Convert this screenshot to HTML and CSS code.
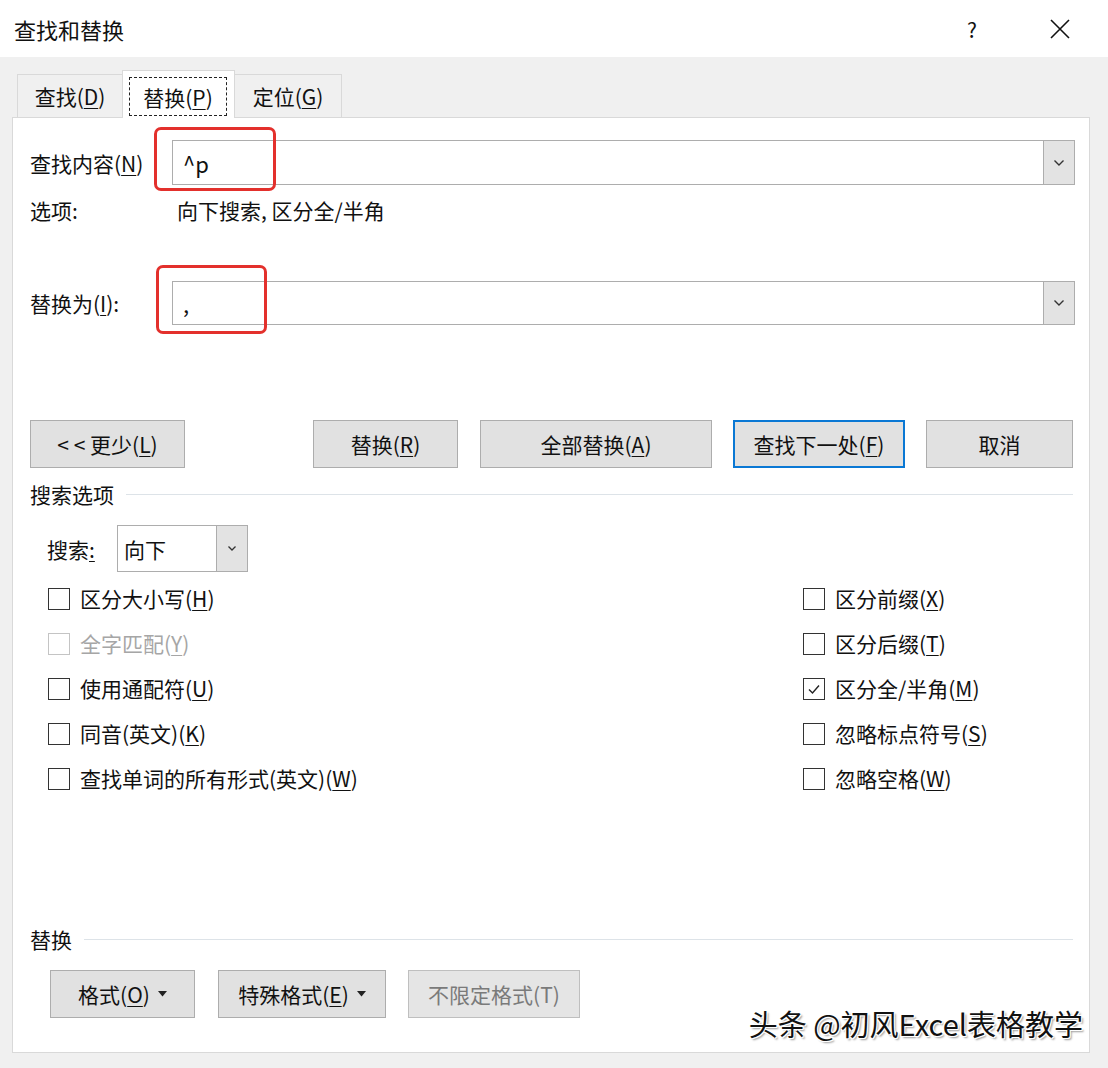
FILE: index.html
```html
<!DOCTYPE html>
<html lang="zh-CN">
<head>
<meta charset="utf-8">
<title>查找和替换</title>
<link rel="stylesheet" href="styles.css">
</head>
<body>
<div class="window">
  <div class="titlebar">
    <div class="title">查找和替换</div>
    <div class="title-actions">
      <span class="help">?</span>
      <svg class="close" width="22" height="22" viewBox="0 0 22 22"><path d="M2 2 L20 20 M20 2 L2 20" stroke="#111" stroke-width="1.6" fill="none"/></svg>
    </div>
  </div>
  <div class="body">
    <div class="tabs">
      <div class="tab">查找(<u>D</u>)</div>
      <div class="tab active"><span class="focus">替换(<u>P</u>)</span></div>
      <div class="tab">定位(<u>G</u>)</div>
    </div>
    <div class="panel">
      <div class="field-row">
        <div class="label">查找内容(<u>N</u>)</div>
        <div class="combo">
          <div class="combo-text">^p</div>
          <div class="combo-btn"><svg width="12" height="8" viewBox="0 0 12 8"><path d="M1.5 1.5 L6 6 L10.5 1.5" stroke="#333" stroke-width="1.4" fill="none"/></svg></div>
        </div>
      </div>
      <div class="options-row">
        <div class="label opt-label">选项:</div>
        <div class="opt-value">向下搜索, 区分全/半角</div>
      </div>
      <div class="field-row replace-row">
        <div class="label">替换为(<u>I</u>):</div>
        <div class="combo">
          <div class="combo-text">,</div>
          <div class="combo-btn"><svg width="12" height="8" viewBox="0 0 12 8"><path d="M1.5 1.5 L6 6 L10.5 1.5" stroke="#333" stroke-width="1.4" fill="none"/></svg></div>
        </div>
      </div>
      <div class="button-row">
        <button class="btn w-less"><span>&lt; &lt; 更少(<u>L</u>)</span></button>
        <button class="btn w-rep"><span>替换(<u>R</u>)</span></button>
        <button class="btn w-all"><span>全部替换(<u>A</u>)</span></button>
        <button class="btn w-next default"><span>查找下一处(<u>F</u>)</span></button>
        <button class="btn w-cancel"><span>取消</span></button>
      </div>
      <div class="section">
        <span class="section-title">搜索选项</span>
        <span class="section-line"></span>
      </div>
      <div class="search-row">
        <span class="search-label">搜索<u>:</u></span>
        <div class="select">
          <div class="select-text">向下</div>
          <div class="select-btn"><svg width="10" height="7" viewBox="0 0 10 7"><path d="M1.5 1.5 L5 5 L8.5 1.5" stroke="#333" stroke-width="1.3" fill="none"/></svg></div>
        </div>
      </div>
      <div class="checks">
        <div class="col">
          <label class="check"><span class="box"></span>区分大小写(<u>H</u>)</label>
          <label class="check disabled"><span class="box"></span>全字匹配(<u>Y</u>)</label>
          <label class="check"><span class="box"></span>使用通配符(<u>U</u>)</label>
          <label class="check"><span class="box"></span>同音(英文)(<u>K</u>)</label>
          <label class="check"><span class="box"></span>查找单词的所有形式(英文)(<u>W</u>)</label>
        </div>
        <div class="col right">
          <label class="check"><span class="box"></span>区分前缀(<u>X</u>)</label>
          <label class="check"><span class="box"></span>区分后缀(<u>T</u>)</label>
          <label class="check"><span class="box"><svg width="16" height="16" viewBox="0 0 16 16"><path d="M3 8.5 L6.5 12 L13 4.5" stroke="#222" stroke-width="1.4" fill="none"/></svg></span>区分全/半角(<u>M</u>)</label>
          <label class="check"><span class="box"></span>忽略标点符号(<u>S</u>)</label>
          <label class="check"><span class="box"></span>忽略空格(<u>W</u>)</label>
        </div>
      </div>
      <div class="section replace-section">
        <span class="section-title">替换</span>
        <span class="section-line"></span>
      </div>
      <div class="bottom-row">
        <button class="btn w-fmt"><span>格式(<u>O</u>)</span><svg class="caret" width="9" height="6" viewBox="0 0 9 6"><path d="M0 0 H9 L4.5 5.5 Z" fill="#222"/></svg></button>
        <button class="btn w-special"><span>特殊格式(<u>E</u>)</span><svg class="caret" width="9" height="6" viewBox="0 0 9 6"><path d="M0 0 H9 L4.5 5.5 Z" fill="#222"/></svg></button>
        <button class="btn w-nofmt disabled"><span>不限定格式(T)</span></button>
      </div>
      <div class="mark mark-find"></div>
      <div class="mark mark-rep"></div>
      <div class="watermark">头条 @初风Excel表格教学</div>
    </div>
  </div>
</div>
</body>
</html>
```
FILE: styles.css
```css
* { box-sizing: border-box; }
html, body { margin: 0; padding: 0; }
body {
  width: 1108px;
  height: 1068px;
  overflow: hidden;
  background: #f0f0f0;
  font-family: "Noto Sans CJK SC", "Noto Sans", sans-serif;
  font-size: 21px;
  color: #111;
}
u { text-decoration: underline; text-underline-offset: 3px; text-decoration-thickness: 1px; }

.titlebar {
  height: 57px;
  background: #fff;
  display: flex;
  align-items: center;
  justify-content: space-between;
  padding: 0 37px 0 14px;
}
.title { font-size: 22px; }
.title-actions { display: flex; align-items: center; gap: 72px; }
.help { font-size: 21px; }
.close { display: block; }

.body { padding: 0 18px 0 12px; }
.tabs {
  display: flex;
  align-items: flex-end;
  padding: 13px 0 0 5px;
  height: 60px;
  position: relative;
  z-index: 2;
}
.tab {
  height: 43px;
  display: flex;
  align-items: center;
  justify-content: center;
  border: 1px solid #d9d9d9;
  border-bottom: none;
  background: #f0f0f0;
}
.tab:nth-child(1) { width: 105px; border-right: none; }
.tab:nth-child(3) { width: 107px; border-left: none; }
.tab.active {
  width: 113px;
  height: 48px;
  background: #fff;
  margin-bottom: -1px;
  padding: 6px 7px 2px 6px;
}
.focus {
  flex: 1;
  align-self: stretch;
  display: flex;
  align-items: center;
  justify-content: center;
  border: 1.5px dashed #222;
}

.panel {
  position: relative;
  background: #fff;
  border: 1px solid #d9d9d9;
  height: 936px;
  padding: 22px 14px 0 17px;
  display: flex;
  flex-direction: column;
}

.field-row { display: flex; align-items: center; height: 45px; }
.label { width: 142px; flex: none; white-space: nowrap; }
.combo {
  flex: 1;
  height: 100%;
  display: flex;
  border: 1px solid #adadad;
  background: #fff;
}
.combo-text { flex: 1; padding-left: 10px; display: flex; align-items: center; font-size: 22px; }
.combo-btn {
  width: 31px;
  background: #e3e3e3;
  border-left: 1px solid #adadad;
  display: flex;
  align-items: center;
  justify-content: center;
}

.options-row { display: flex; margin-top: 13px; height: 24px; align-items: center; }
.opt-label { width: 147px; }
.replace-row { margin-top: 59px; height: 44px; }

.btn {
  font-family: inherit;
  font-size: 21px;
  color: #111;
  background: #e1e1e1;
  border: 1px solid #adadad;
  height: 48px;
  padding: 0;
  display: inline-flex;
  align-items: center;
  justify-content: center;
  white-space: nowrap;
}
.button-row { display: flex; margin-top: 95px; }
.w-less { width: 155px; }
.w-rep { width: 145px; margin-left: 128px; }
.w-all { width: 232px; margin-left: 22px; }
.w-next { width: 172px; margin-left: 21px; }
.w-cancel { width: 147px; margin-left: 21px; }
.btn.default { border: 2px solid #0a78d4; }

.section { display: flex; align-items: center; margin-top: 14px; height: 24px; }
.section-title { white-space: nowrap; }
.section-line { flex: 1; border-top: 1px solid #dde3e8; margin: 0 2px 0 12px; }

.search-row { display: flex; align-items: center; margin-top: 19px; padding-left: 17px; height: 47px; }
.search-label { width: 70px; }
.select {
  width: 131px;
  height: 47px;
  display: flex;
  border: 1px solid #adadad;
}
.select-text { flex: 1; padding-left: 6px; display: flex; align-items: center; }
.select-btn {
  width: 31px;
  background: #e3e3e3;
  border-left: 1px solid #adadad;
  display: flex;
  align-items: center;
  justify-content: center;
}

.checks { display: flex; margin-top: 4px; padding-left: 18px; }
.col { display: flex; flex-direction: column; width: 755px; }
.col.right { width: auto; }
.check { height: 45px; display: flex; align-items: center; white-space: nowrap; padding-bottom: 2px; }
.box {
  width: 22px;
  height: 22px;
  border: 1.5px solid #333;
  margin-right: 10px;
  margin-top: 2px;
  display: flex;
  align-items: center;
  justify-content: center;
  flex: none;
}
.check.disabled { color: #a6a6a6; }
.check.disabled .box { border-color: #c4c4c4; }

.replace-section { margin-top: 126px; }
.bottom-row { display: flex; margin-top: 19px; padding-left: 20px; }
.w-fmt { width: 145px; }
.w-special { width: 168px; margin-left: 23px; }
.w-nofmt { width: 172px; margin-left: 22px; }
.btn.disabled { color: #7a7a7a; border-color: #bfbfbf; background: #e5e5e5; }
.caret { margin-left: 8px; }

.mark {
  position: absolute;
  border: 3px solid #e3302c;
  border-radius: 7px;
}
.mark-find { left: 141px; top: 9px; width: 122px; height: 64px; }
.mark-rep { left: 143px; top: 147px; width: 111px; height: 69px; }

.watermark {
  position: absolute;
  right: 6px;
  bottom: 8px;
  font-size: 29px;
  color: #111;
  white-space: nowrap;
  text-shadow: 1px 1px 0 #fff, -1px -1px 0 #fff, 1px -1px 0 #fff, -1px 1px 0 #fff, 2px 2px 2px #9a9a9a;
}
```
